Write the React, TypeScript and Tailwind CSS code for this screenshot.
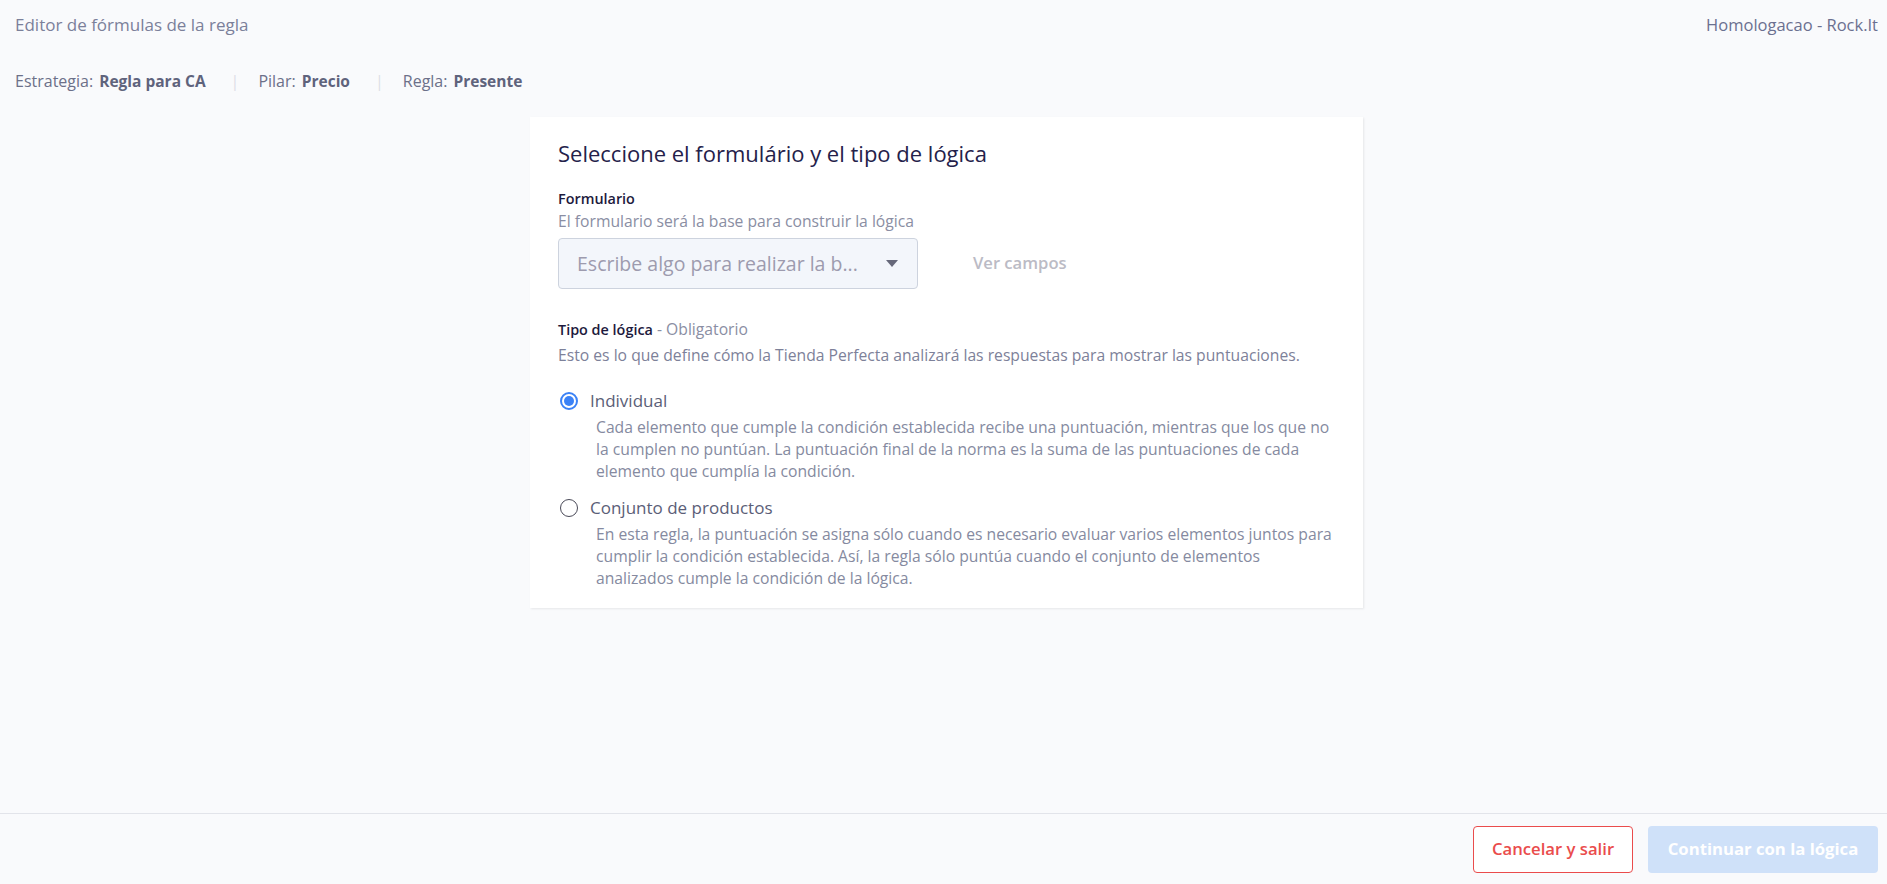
import { useState } from "react";

const font = { fontFamily: '"Open Sans", "Noto Sans", sans-serif' };

const options = [
  {
    id: "individual",
    label: "Individual",
    text: "Cada elemento que cumple la condición establecida recibe una puntuación, mientras que los que no la cumplen no puntúan. La puntuación final de la norma es la suma de las puntuaciones de cada elemento que cumplía la condición.",
  },
  {
    id: "conjunto",
    label: "Conjunto de productos",
    text: "En esta regla, la puntuación se asigna sólo cuando es necesario evaluar varios elementos juntos para cumplir la condición establecida. Así, la regla sólo puntúa cuando el conjunto de elementos analizados cumple la condición de la lógica.",
  },
];

function Radio({ checked }: { checked: boolean }) {
  return checked ? (
    <span className="w-[18px] h-[18px] rounded-full border-2 border-[#3b82f6] flex items-center justify-center shrink-0">
      <span className="w-[10px] h-[10px] rounded-full bg-[#3b82f6]" />
    </span>
  ) : (
    <span className="w-[18px] h-[18px] rounded-full border-[1.5px] border-[#4a4a58] shrink-0" />
  );
}

export default function App() {
  const [logic, setLogic] = useState("individual");

  return (
    <div className="h-screen flex flex-col bg-[#f9fafc] overflow-hidden" style={font}>
      <div className="flex-1">
        <div className="flex justify-between items-center pl-[15px] pr-[9px] pt-[13px]">
          <span className="text-[17px] leading-6 text-[#7b809a]">Editor de fórmulas de la regla</span>
          <span className="text-[16.5px] leading-6 text-[#6b7090]">Homologacao - Rock.It</span>
        </div>

        <div className="flex items-center pl-[15px] mt-[33px] text-[16px] leading-[22px] text-[#6c7089]">
          <span>Estrategia:</span>
          <span className="ml-[6px] text-[15.5px] font-bold text-[#5f637c]">Regla para CA</span>
          <span className="ml-[25px] mr-[19px] text-[#dcdee6]">|</span>
          <span>Pilar:</span>
          <span className="ml-[6px] text-[15.5px] font-bold text-[#5f637c]">Precio</span>
          <span className="ml-[25px] mr-[19px] text-[#dcdee6]">|</span>
          <span>Regla:</span>
          <span className="ml-[6px] text-[15.5px] font-bold text-[#5f637c]">Presente</span>
        </div>

        <div className="ml-[530px] mt-[25px] w-[833px] bg-white shadow-[1px_1px_2px_rgba(0,0,0,0.08)] pl-[28px] pr-[28px] pt-[22px] pb-[19px]">
          <h2 className="text-[22px] leading-7 text-[#24214a]">Seleccione el formulário y el tipo de lógica</h2>

          <p className="mt-[23px] text-[14.4px] leading-[18px] font-semibold text-[#1d1a3d]">Formulario</p>
          <p className="mt-[3px] text-[15.7px] leading-5 text-[#8a8ea3]">El formulario será la base para construir la lógica</p>

          <div className="mt-[7px] flex items-center">
            <div className="w-[360px] h-[51px] rounded-[4px] border border-[#cdd3de] bg-[#f3f6fb] flex items-center justify-between pl-[18px] pr-[18px]">
              <span className="text-[19.5px] text-[#9d9bae]">Escribe algo para realizar la b...</span>
              <svg width="12" height="7" viewBox="0 0 12 7" className="mr-[1px]">
                <path d="M0 0h12L6 7z" fill="#66687a" />
              </svg>
            </div>
            <span className="ml-[55px] text-[16.6px] font-semibold text-[#bbbbc5]">Ver campos</span>
          </div>

          <p className="mt-[31px] text-[14.4px] leading-[18px]">
            <span className="font-semibold text-[#1d1a3d]">Tipo de lógica</span>
            <span className="text-[15.7px] text-[#8a8ea3]"> - Obligatorio</span>
          </p>
          <p className="mt-[6px] text-[15.7px] leading-5 text-[#7d8199]">
            Esto es lo que define cómo la Tienda Perfecta analizará las respuestas para mostrar las puntuaciones.
          </p>

          <div className="mt-[24px] flex flex-col gap-[14px]">
            {options.map((o) => (
              <div key={o.id} className="cursor-pointer" onClick={() => setLogic(o.id)}>
                <div className="flex items-center gap-[12px] pl-[2px]">
                  <Radio checked={logic === o.id} />
                  <span className="text-[17px] leading-6 text-[#5b5e77]">{o.label}</span>
                </div>
                <p className="mt-[3px] pl-[38px] text-[15.7px] leading-[22px] text-[#858aa0]">{o.text}</p>
              </div>
            ))}
          </div>
        </div>
      </div>

      <div className="h-[71px] border-t border-[#e2e4ea] flex items-center justify-end gap-[15px] pr-[9px]">
        <button className="w-[160px] h-[47px] rounded-[4px] border border-[#ea4c4c] text-[#ea4c4c] text-[16.7px] font-semibold bg-white">
          Cancelar y salir
        </button>
        <button className="w-[230px] h-[47px] rounded-[4px] bg-[#cfe1f9] text-white text-[16.7px] font-bold" disabled>
          Continuar con la lógica
        </button>
      </div>
    </div>
  );
}
